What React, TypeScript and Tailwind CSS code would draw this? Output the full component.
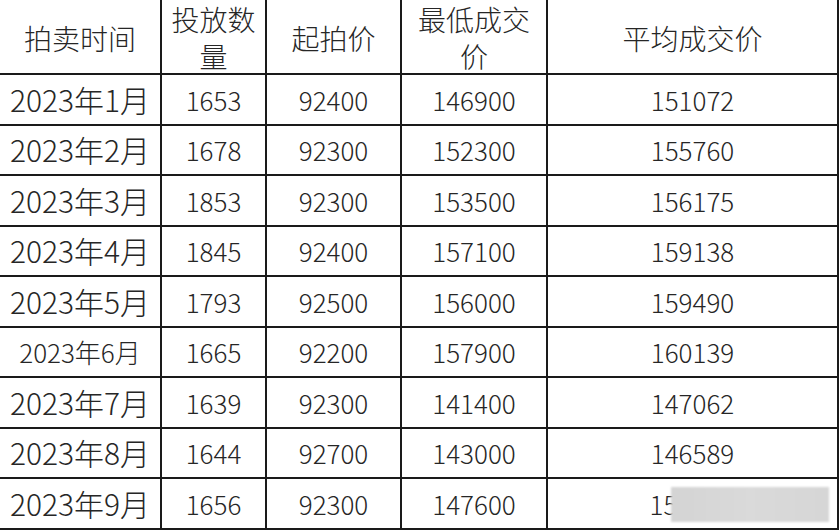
import React from "react";

const rows = [
  ["2023年1月", "1653", "92400", "146900", "151072"],
  ["2023年2月", "1678", "92300", "152300", "155760"],
  ["2023年3月", "1853", "92300", "153500", "156175"],
  ["2023年4月", "1845", "92400", "157100", "159138"],
  ["2023年5月", "1793", "92500", "156000", "159490"],
  ["2023年6月", "1665", "92200", "157900", "160139"],
  ["2023年7月", "1639", "92300", "141400", "147062"],
  ["2023年8月", "1644", "92700", "143000", "146589"],
  ["2023年9月", "1656", "92300", "147600", "15"],
];

const headers = ["拍卖时间", "投放数量", "起拍价", "最低成交价", "平均成交价"];

export default function App() {
  return (
    <div
      className="w-[840px] h-[530px] bg-white overflow-hidden text-[#262626] font-light"
      style={{ fontFamily: '"Noto Sans CJK SC", "Noto Sans", sans-serif' }}
    >
      <div className="grid grid-cols-[160px_103px_133px_144px_289px] grid-rows-[73px_repeat(9,48.5px)] gap-[2px] bg-[#1a1a1a] pr-[2px] pb-[2px] w-[839px]">
        {headers.map((h) => (
          <div
            key={h}
            className="bg-white flex items-center justify-center text-center text-[28px] leading-[37px] px-[6px] pt-[3px]"
          >
            {h}
          </div>
        ))}
        {rows.map((r, i) =>
          r.map((c, j) => (
            <div
              key={`${i}-${j}`}
              className={`bg-white flex items-center justify-center relative ${
                j === 0 ? (i === 5 ? "text-[26px]" : "text-[30px]") : "text-[26px]"
              }`}
            >
              {i === 8 && j === 4 ? (
                <>
                  <span className="mr-[58px]">15</span>
                  <div className="absolute left-[123px] top-[8px] w-[158px] h-[35px] bg-gradient-to-r from-[#d4d4d4] via-[#dadada] to-[#d6d6d6] blur-[1px]" />
                </>
              ) : (
                c
              )}
            </div>
          ))
        )}
      </div>
    </div>
  );
}
